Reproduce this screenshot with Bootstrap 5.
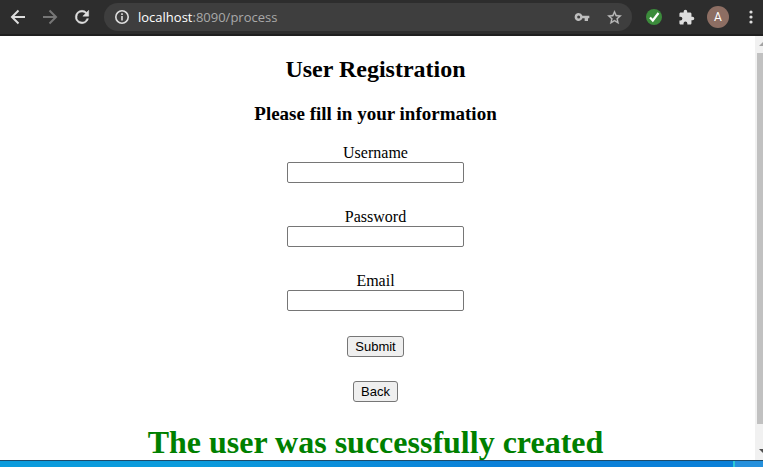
<!DOCTYPE html>
<html lang="en">
<head>
<meta charset="utf-8">
<meta name="viewport" content="width=device-width, initial-scale=1">
<title>User Registration</title>
<link href="https://cdn.jsdelivr.net/npm/bootstrap@5.3.0/dist/css/bootstrap.min.css" rel="stylesheet">
<style>
  body { background: #fff; color: #000; }
  .toolbar { height: 36px; background: #2d2d2d; border-bottom: 2px solid #1f1f1f; padding-left: 2px; }
  .tool { width: 32px; height: 32px; border: 0; background: none; padding: 0; color: #dedede; }
  .tool:disabled { color: #767676; }
  .tool svg, .omnibox svg { display: block; }
  .tool-menu { width: 29px; padding-left: 4px; }
  .omnibox { height: 28px; background: #3e3e3e; margin: 0 6px; padding: 0 2px; color: #dedede; }
  .omnibox .tool { color: #bdbdbd; }
  .omnibox .tool-info { color: #dedede; }
  .address { font: 13px/20px "Open Sans", "Noto Sans", sans-serif; color: #a9a9a9; }
  .address-host { color: #fff; }
  .avatar { width: 22px; height: 22px; background: #8d6e63; color: #fff; font: 12px/22px Roboto, sans-serif; }
  .page { font: 16px/18px "Liberation Serif", "Times New Roman", serif; padding: 20px 4px 0 0; }
  .page h1 { font-size: 32px; line-height: 32px; font-weight: 700; color: green; }
  .page h2 { font-size: 24px; line-height: 27px; font-weight: 700; margin-bottom: 20px; }
  .page h3 { font-size: 19px; line-height: 22px; font-weight: 700; margin-bottom: 19px; }
  .entry { margin-bottom: 25px; }
  .entry input { width: 177px; height: 21px; border: 1px solid #767676; border-radius: 2px; padding: 1px 2px; font: 13px "Liberation Sans", Arial, sans-serif; }
  .push { height: 21px; border: 1px solid #767676; border-radius: 3px; background: #efefef; color: #000; padding: 0 7px; font: 13px/19px "Liberation Sans", Arial, sans-serif; margin-bottom: 24px; }
  .scroller { width: 8px; background: #f1f1f1; color: #505050; }
  .scroller svg { display: block; flex: none; }
  .thumb { background: #c1c1c1; margin-left: 2px; }
  .scroll-cap { height: 17px; padding: 6px 0 0 4px; color: #a3a3a3; }
  .scroll-foot { height: 36px; padding: 25px 0 0 4px; }
  .desktop-strip { height: 7px; border-top: 1px solid #1c4c6c; background: linear-gradient(90deg, #0a9bdc, #0a9bdc 25%, #0a80d8 65%, #0a80d8); }
  .desktop-edge { width: 30px; border-left: 2px solid #2cc8d4; background: #2590dc; }
</style>
</head>
<body class="vh-100 d-flex flex-column overflow-hidden">
<header class="toolbar d-flex align-items-center flex-shrink-0">
  <button class="tool d-flex align-items-center justify-content-center flex-shrink-0" type="button" aria-label="Back in history">
    <svg width="16" height="16" viewBox="0 0 16 16" fill="none" stroke="currentColor" stroke-width="2"><path d="M15 8H2.5M8.5 1.5 2 8l6.500 6.500"/></svg>
  </button>
  <button class="tool d-flex align-items-center justify-content-center flex-shrink-0" type="button" aria-label="Forward" disabled>
    <svg width="16" height="16" viewBox="0 0 16 16" fill="none" stroke="currentColor" stroke-width="2"><path d="M1 8h12.500M7.500 1.500 14 8l-6.500 6.500"/></svg>
  </button>
  <button class="tool d-flex align-items-center justify-content-center flex-shrink-0" type="button" aria-label="Reload">
    <svg width="20" height="20" viewBox="0 0 24 24" fill="currentColor" stroke="currentColor" stroke-width=".6"><path d="M17.65 6.35A7.960 7.960 0 0 0 12 4a8 8 0 1 0 7.730 10h-2.080A6 6 0 1 1 12 6c1.660 0 3.140.69 4.220 1.780L13 11h7V4z"/></svg>
  </button>
  <div class="omnibox d-flex align-items-center flex-grow-1 rounded-pill">
    <button class="tool tool-info d-flex align-items-center justify-content-center" type="button" aria-label="Site information">
      <svg width="16" height="16" viewBox="0 0 16 16" fill="none" stroke="currentColor" stroke-width="1.600"><circle cx="8" cy="8" r="6.200"/><path d="M8 7v4.500M8 4.300v1.700"/></svg>
    </button>
    <a class="address flex-grow-1 text-decoration-none text-nowrap" href="#"><span class="address-host">localhost</span>:8090/process</a>
    <button class="tool d-flex align-items-center justify-content-center" type="button" aria-label="Saved passwords">
      <svg width="16" height="16" viewBox="0 0 24 24" fill="currentColor"><path d="M12.650 10A6 6 0 0 0 7 6a6 6 0 1 0 5.650 8H16v4h5v-4h2v-4zM7 14.300a2.300 2.300 0 1 1 0-4.600 2.300 2.300 0 0 1 0 4.600z"/></svg>
    </button>
    <button class="tool d-flex align-items-center justify-content-center" type="button" aria-label="Bookmark">
      <svg width="17" height="17" viewBox="0 0 24 24" fill="currentColor" stroke="currentColor" stroke-width=".4"><path d="m22 9.240-7.190-.62L12 2 9.190 8.630 2 9.240l5.460 4.730L5.820 21 12 17.270 18.180 21l-1.630-7.030zM12 15.400l-3.760 2.270 1-4.280-3.320-2.880 4.380-.38L12 6.100l1.710 4.040 4.380.38-3.320 2.880 1 4.280z"/></svg>
    </button>
  </div>
  <button class="tool d-flex align-items-center justify-content-center flex-shrink-0" type="button" aria-label="Protection status">
    <svg width="16" height="16" viewBox="0 0 16 16"><circle cx="8" cy="8" r="8" fill="#3c8c3c"/><path d="m4 8.500 2.800 3L12.500 4" fill="none" stroke="#fff" stroke-width="2.200"/></svg>
  </button>
  <button class="tool d-flex align-items-center justify-content-center flex-shrink-0" type="button" aria-label="Extensions">
    <svg width="17" height="17" viewBox="0 0 24 24" fill="currentColor"><path d="M20.500 11H19V7c0-1.100-.9-2-2-2h-4V3.500a2.500 2.500 0 0 0-5 0V5H4c-1.100 0-1.990.9-1.990 2v3.800H3.500a2.700 2.700 0 0 1 0 5.400H2V20c0 1.100.9 2 2 2h3.800v-1.500a2.700 2.700 0 0 1 5.400 0V22H17c1.100 0 2-.9 2-2v-4h1.500a2.500 2.500 0 0 0 0-5z"/></svg>
  </button>
  <button class="tool d-flex align-items-center justify-content-center flex-shrink-0" type="button" aria-label="Profile">
    <span class="avatar rounded-circle">A</span>
  </button>
  <button class="tool tool-menu d-flex align-items-center justify-content-center flex-shrink-0" type="button" aria-label="Menu">
    <svg width="4" height="14" viewBox="0 0 4 14" fill="currentColor"><circle cx="2" cy="2" r="1.600"/><circle cx="2" cy="7" r="1.600"/><circle cx="2" cy="12" r="1.600"/></svg>
  </button>
</header>
<div class="d-flex flex-grow-1 overflow-hidden">
  <main class="page flex-grow-1 text-center">
    <h2>User Registration</h2>
    <h3>Please fill in your information</h3>
    <form class="d-flex flex-column align-items-center">
      <div class="entry d-flex flex-column align-items-center"><label for="username">Username</label><input id="username" type="text"></div>
      <div class="entry d-flex flex-column align-items-center"><label for="password">Password</label><input id="password" type="password"></div>
      <div class="entry d-flex flex-column align-items-center"><label for="email">Email</label><input id="email" type="text"></div>
      <button class="push" type="submit">Submit</button>
      <button class="push" type="button">Back</button>
    </form>
    <h1 class="m-0">The user was successfully created</h1>
  </main>
  <div class="scroller d-flex flex-column flex-shrink-0 overflow-hidden" aria-hidden="true">
    <div class="scroll-cap flex-shrink-0"><svg width="8" height="4" viewBox="0 0 8 4" fill="currentColor"><path d="M0 4 4 0l4 4z"/></svg></div>
    <div class="thumb flex-grow-1"></div>
    <div class="scroll-foot flex-shrink-0"><svg width="8" height="4" viewBox="0 0 8 4" fill="currentColor"><path d="M0 0h8L4 4z"/></svg></div>
  </div>
</div>
<footer class="desktop-strip d-flex justify-content-end flex-shrink-0"><div class="desktop-edge"></div></footer>
<script src="https://cdn.jsdelivr.net/npm/bootstrap@5.3.0/dist/js/bootstrap.bundle.min.js"></script>
</body>
</html>
